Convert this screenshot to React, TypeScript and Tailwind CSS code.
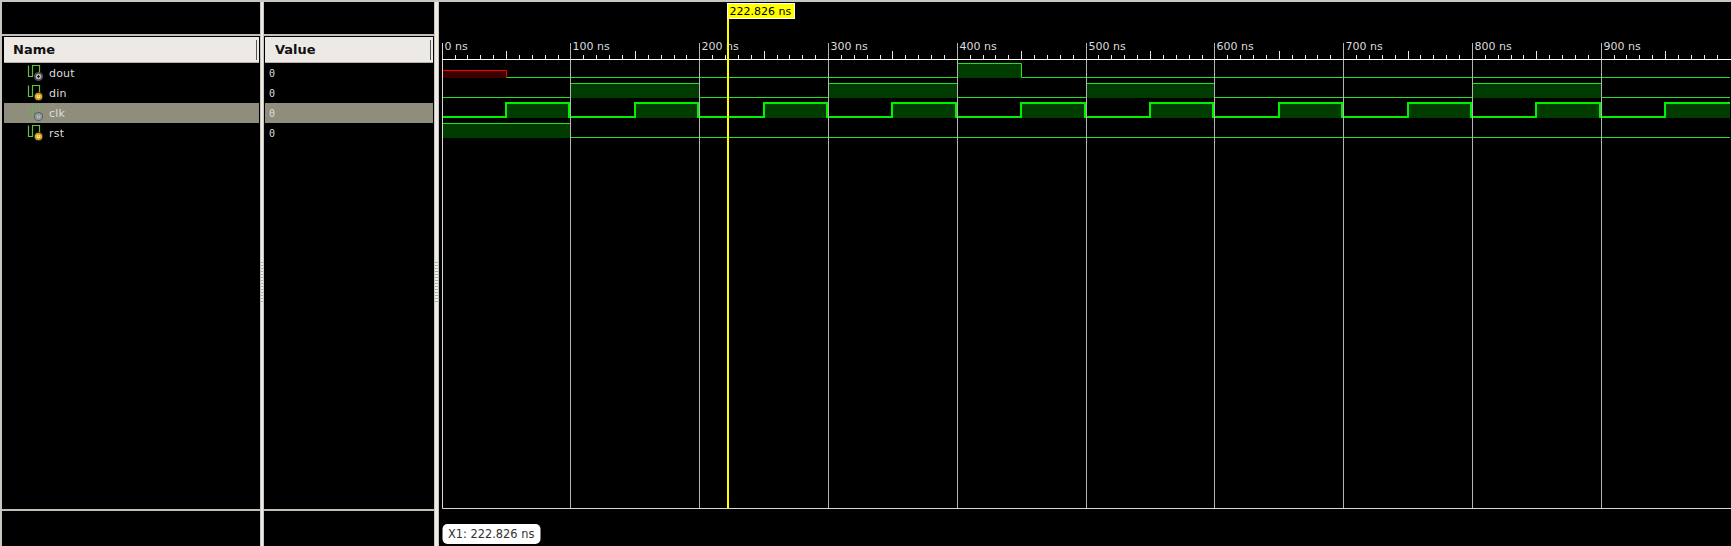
const NS = 1.2878;
const X0 = 442.2;
const END_NS = 1000;
const END_X = 1730;

// pixel column a time lands on, the viewer snaps everything to whole pixels
const col = (ns: number) => Math.min(Math.floor(X0 + ns * NS), END_X);
const px = (ns: number) => col(ns) + 0.5;

type Signal = {
  name: string;
  kind: "out" | "in";
  selected?: boolean;
  top: number;
  low: number;
  highs: [number, number][];
  thick?: boolean;
  red?: [number, number];
};

const clkHighs: [number, number][] = [50, 150, 250, 350, 450, 550, 650, 750, 850, 950].map(
  (s) => [s, s + 50] as [number, number]
);

const signals: Signal[] = [
  { name: "dout", kind: "out", top: 63.5, low: 77.5, highs: [[400, 450]], red: [0, 50] },
  { name: "din", kind: "in", top: 83.5, low: 97.5, highs: [[100, 200], [300, 400], [500, 600], [800, 900]] },
  { name: "clk", kind: "in", selected: true, top: 103, low: 117, highs: clkHighs, thick: true },
  { name: "rst", kind: "in", top: 123.5, low: 137.5, highs: [[0, 100]] },
];

function wavePath(s: Signal) {
  // thick trace sits one pixel left on falling edges
  const rise = (ns: number) => (s.thick ? col(ns) : px(ns));
  const fall = (ns: number) => (s.thick ? (ns >= END_NS ? END_X : col(ns) - 1) : Math.min(px(ns), END_X));
  let d = `M${px(s.red ? s.red[1] : 0)} ${s.low}`;
  let first = true;
  for (const [a, b] of s.highs) {
    if (first && a === 0) {
      d = `M${px(0)} ${s.top}H${fall(b)}V${s.low}`;
    } else if (b >= END_NS) {
      d += `H${rise(a)}V${s.top}H${END_X}`;
      return d;
    } else {
      d += `H${rise(a)}V${s.top}H${fall(b)}V${s.low}`;
    }
    first = false;
  }
  return d + `H${END_X}`;
}

function SignalIcon({ kind, dim }: { kind: "out" | "in"; dim?: boolean }) {
  return (
    <svg width="17" height="20" viewBox="0 0 17 20" className={`block shrink-0 ${dim ? "opacity-50" : ""}`}>
      <path d="M1.5 2.5V13.5H5.5V2.5H12.5V10" fill="none" stroke="#62c040" strokeWidth="1.2" />
      {kind === "out" ? (
        <>
          <circle cx="11.5" cy="13.5" r="4.6" fill="#4e4e4e" />
          <circle cx="11.5" cy="13.5" r="2.8" fill="#b4b4b4" />
          <path d="M10 13.5H13M11.5 12V15" stroke="#222" strokeWidth="1" />
        </>
      ) : (
        <>
          <circle cx="11.5" cy="13.5" r="4.6" fill="#333333" />
          <circle cx="11.5" cy="13.5" r="3.6" fill={dim ? "#7aa7d8" : "#e9a60f"} />
          <path d="M10.3 12V14.5H12.7V12" fill="none" stroke="#fff3c4" strokeWidth="1" />
        </>
      )}
    </svg>
  );
}

function Header({ label, pad }: { label: string; pad: string }) {
  return (
    <div className="mt-px flex h-[26px] items-center justify-between border-b border-[#b9b5ae] bg-[#edeae5] pr-[2px]">
      <span className={`${pad} text-[13px] font-bold text-[#111]`}>{label}</span>
      <span className="h-5 w-px bg-[#555]" />
    </div>
  );
}

function Grip({ width }: { width: string }) {
  return (
    <div className={`flex shrink-0 justify-center border-x border-[#c9c5bf] bg-[#eeebe6] ${width}`}>
      <div className="mt-[260px] h-10 w-[3px] bg-[repeating-linear-gradient(to_bottom,#b0ada6_0px,#b0ada6_1px,#f4f2ee_1px,#f4f2ee_3px)]" />
    </div>
  );
}

function Pane({ width, inset, children, header }: { width: string; inset: string; children: React.ReactNode; header: React.ReactNode }) {
  return (
    <div className={`flex h-full shrink-0 flex-col ${width}`}>
      <div className="h-8 bg-black" />
      <div className="h-0.5 bg-[#c4c0b9]" />
      <div className={`flex flex-1 flex-col bg-black ${inset}`}>
        {header}
        {children}
      </div>
      <div className="h-0.5 bg-[#c4c0b9]" />
      <div className="h-[35px] bg-black" />
    </div>
  );
}

export default function App() {
  const grid = Array.from({ length: 10 }, (_, i) => i * 100);
  const ticks = Array.from({ length: END_NS / 10 }, (_, i) => i * 10);

  return (
    <div className="flex h-[546px] w-[1731px] overflow-hidden bg-[#c9c5bf] pt-0.5 pl-0.5 font-['DejaVu_Sans',sans-serif]">
      <Pane width="w-[258px]" inset="pl-[2px] pr-px" header={<Header label="Name" pad="pl-[9px]" />}>
        {signals.map((s) => (
          <div key={s.name} className={`flex h-5 items-center pl-[23px] text-[11px] text-[#dedede] ${s.selected ? "bg-[#8f8d7c]" : ""}`}>
            <SignalIcon kind={s.kind} dim={s.selected} />
            <span className="mt-[2px] ml-[5px] tracking-[0.2px]">{s.name}</span>
          </div>
        ))}
      </Pane>
      <Grip width="w-1" />
      <Pane width="w-[170px]" inset="pl-px pr-px" header={<Header label="Value" pad="pl-[10px]" />}>
        {signals.map((s) => (
          <div key={s.name} className={`flex h-5 items-center pl-1 font-['DejaVu_Sans_Mono',monospace] text-[10px] text-[#dedede] ${s.selected ? "bg-[#8f8d7c]" : ""}`}>
            0
          </div>
        ))}
      </Pane>
      <Grip width="w-[5px]" />

      <div className="h-full flex-1 bg-black">
        <svg width="1292" height="544" viewBox="439 2 1292 544" className="block">
          {/* waves */}
          {signals.map((s) => (
            <g key={s.name}>
              {s.highs.map(([a, b]) => (
                <rect
                  key={a}
                  x={col(a)}
                  y={Math.floor(s.top)}
                  width={(b >= END_NS ? END_X : col(b)) - col(a)}
                  height={Math.floor(s.low) - Math.floor(s.top) + 1}
                  fill="#003c00"
                />
              ))}
              {s.red && (
                <>
                  <rect x={col(s.red[0])} y={70} width={col(s.red[1]) - col(s.red[0])} height={8} fill="#3c0000" />
                  <path d={`M${col(s.red[0])} 70.5H${px(s.red[1])}V77.5`} fill="none" stroke="#ff0000" />
                </>
              )}
              <path d={wavePath(s)} fill="none" stroke={s.thick ? "#00f000" : "#22e022"} strokeWidth={s.thick ? 2 : 1} />
            </g>
          ))}

          {/* frame and time grid */}
          <path d="M442.5 43V508.5H1731" fill="none" stroke="#d8d8d8" />
          {grid.slice(1).map((g) => (
            <line key={g} x1={px(g)} x2={px(g)} y1={43} y2={508} stroke="#b4b4b4" />
          ))}

          {/* ruler */}
          <line x1={442} x2={1731} y1={59.5} y2={59.5} stroke="#ffffff" />
          {ticks.map((t) => {
            if (t % 100 === 0) return null;
            return <line key={t} x1={px(t)} x2={px(t)} y1={t % 50 === 0 ? 51 : 55} y2={59} stroke="#e8e8e8" />;
          })}
          {grid.map((g) => (
            <text key={g} x={col(g) + 2.5} y={50} fontSize="11" fill="#dcdcdc" fontFamily="DejaVu Sans">
              {g} ns
            </text>
          ))}

          {/* cursor */}
          <rect x={727} y={18} width={2} height={490.5} fill="#ffff00" />
          <rect x={727.5} y={3.5} width={67} height={15} fill="#ffff00" stroke="#ffffff" />
          <text x={729.5} y={15} fontSize="11" fill="#000000" fontFamily="DejaVu Sans">
            222.826 ns
          </text>

          {/* marker readout */}
          <rect x={442.5} y={524} width={98} height={20} rx={5} fill="#ffffff" />
          <text x={448} y={538} fontSize="11.4" fill="#333333" fontFamily="DejaVu Sans">
            X1: 222.826 ns
          </text>
        </svg>
      </div>
    </div>
  );
}
